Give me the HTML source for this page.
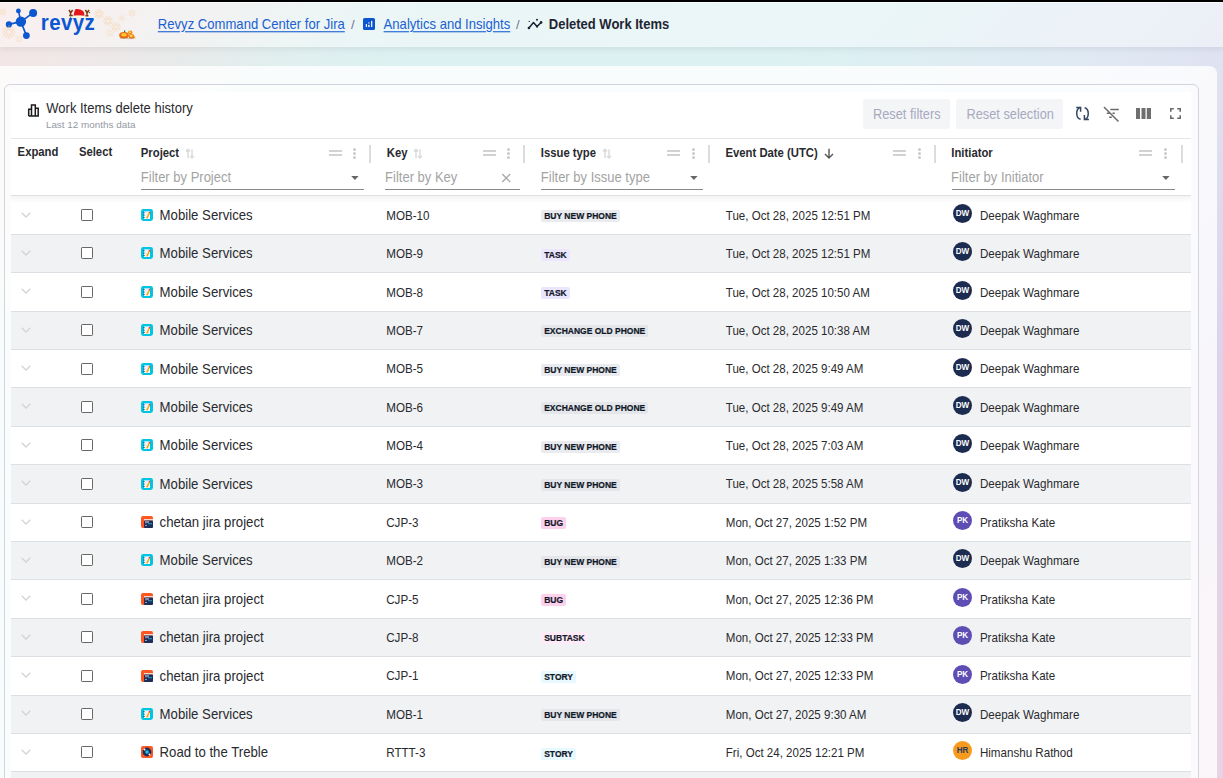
<!DOCTYPE html>
<html><head><meta charset="utf-8"><title>Deleted Work Items</title>
<style>
html,body{margin:0;padding:0;}
body{width:1223px;height:778px;overflow:hidden;position:relative;font-family:"Liberation Sans", sans-serif;
background:linear-gradient(135deg,#f6e4e4 0%,#efe8e8 7%,#e8eaea 12%,#e2eeee 16%,#dcf1f1 23%,#dcf1f2 42%,#e0e9f3 58%,#dcd3ec 78%,#e6d3e3 96%);}
.abs{position:absolute;} .abs>svg{display:block;}
.t{position:absolute;white-space:nowrap;}
#topbar{position:absolute;left:0;top:0;width:1223px;height:2px;background:#000;}
#hdr{position:absolute;left:0;top:2px;width:1223px;height:45px;
background:rgba(255,255,255,.4);
box-shadow:0 2px 6px rgba(60,70,90,.10);border-top:1px solid rgba(255,255,255,.7);box-sizing:border-box;}
#card{position:absolute;left:0;top:66px;width:1217px;height:760px;background:rgba(255,255,255,.8);border-top-right-radius:8px;}
#box{position:absolute;left:4px;top:84px;width:1195px;height:760px;border:1px solid #d2d5de;border-radius:6px;background:rgba(255,255,255,.35);box-sizing:border-box;}
#panel{position:absolute;left:11px;top:92px;width:1180px;height:700px;background:#fff;}
.btn{position:absolute;background:#f4f5f7;border-radius:3px;}
.hl{position:absolute;left:11px;width:1180px;height:1px;background:#e4e6ea;}
.row{position:absolute;left:11px;width:1180px;}
.cb{position:absolute;width:12px;height:12px;box-sizing:border-box;border:1.6px solid #676767;border-radius:1.2px;background:#fff;}
.loz{position:absolute;height:12.4px;line-height:13px;padding:0 3.2px;font-size:8.5px;font-weight:700;color:#101828;border-radius:2px;white-space:nowrap;-webkit-text-stroke:0.2px #101828;}
.av{position:absolute;width:19px;height:19px;border-radius:50%;font-size:8.1px;font-weight:700;line-height:20.6px;text-align:center;} .av span{display:inline-block;transform:scaleY(1.17);}
</style></head><body>
<div id="topbar"></div>
<div id="hdr"></div>
<svg class="abs" style="left:0;top:2px" width="45" height="45" viewBox="0 2 45 45">
<g stroke="#0b57d0" stroke-width="1.6" stroke-linecap="round">
<line x1="20.9" y1="21.6" x2="18.4" y2="10.9"/><line x1="20.9" y1="21.6" x2="33.1" y2="12.9"/>
<line x1="20.9" y1="21.6" x2="8.9" y2="24.4"/><line x1="20.9" y1="21.6" x2="26.4" y2="35.6"/></g>
<g fill="#0b57d0"><circle cx="20.9" cy="21.6" r="5.2"/><circle cx="18.4" cy="10.9" r="2.4"/>
<circle cx="33.1" cy="12.9" r="4"/><circle cx="8.9" cy="24.4" r="3.1"/><circle cx="26.4" cy="35.6" r="3.4"/></g>
</svg>
<div class="t" style="left:40.80px;top:12.85px;font-size:20.5px;line-height:20.5px;color:#0b57d0;font-weight:700;letter-spacing:0.4px;transform:scaleY(1.12);transform-origin:0 85%;">revyz</div>
<svg class="abs" style="left:0;top:0" width="140" height="45" viewBox="0 0 140 45"><g stroke="#f5cf9a" stroke-width="1.1" opacity="0.55" stroke-linecap="round" stroke-dasharray="1 0.8"><line x1="100.8" y1="14.0" x2="104.0" y2="14.0"/><line x1="100.4" y1="15.0" x2="103.0" y2="16.9"/><line x1="99.5" y1="15.7" x2="100.5" y2="18.8"/><line x1="98.5" y1="15.7" x2="97.5" y2="18.8"/><line x1="97.6" y1="15.0" x2="95.0" y2="16.9"/><line x1="97.2" y1="14.0" x2="94.0" y2="14.0"/><line x1="97.6" y1="13.0" x2="95.0" y2="11.1"/><line x1="98.5" y1="12.3" x2="97.5" y2="9.2"/><line x1="99.5" y1="12.3" x2="100.5" y2="9.2"/><line x1="100.4" y1="13.0" x2="103.0" y2="11.1"/></g><g stroke="#f5cf9a" stroke-width="1.1" opacity="0.55" stroke-linecap="round" stroke-dasharray="1 0.8"><line x1="109.9" y1="21.0" x2="113.5" y2="21.0"/><line x1="109.6" y1="22.1" x2="112.4" y2="24.2"/><line x1="108.6" y1="22.8" x2="109.7" y2="26.2"/><line x1="107.4" y1="22.8" x2="106.3" y2="26.2"/><line x1="106.4" y1="22.1" x2="103.6" y2="24.2"/><line x1="106.1" y1="21.0" x2="102.5" y2="21.0"/><line x1="106.4" y1="19.9" x2="103.6" y2="17.8"/><line x1="107.4" y1="19.2" x2="106.3" y2="15.8"/><line x1="108.6" y1="19.2" x2="109.7" y2="15.8"/><line x1="109.6" y1="19.9" x2="112.4" y2="17.8"/></g><g stroke="#f5cf9a" stroke-width="1.1" opacity="0.5" stroke-linecap="round" stroke-dasharray="1 0.8"><line x1="117.8" y1="27.0" x2="121.0" y2="27.0"/><line x1="117.4" y1="28.0" x2="120.0" y2="29.9"/><line x1="116.5" y1="28.7" x2="117.5" y2="31.8"/><line x1="115.5" y1="28.7" x2="114.5" y2="31.8"/><line x1="114.6" y1="28.0" x2="112.0" y2="29.9"/><line x1="114.2" y1="27.0" x2="111.0" y2="27.0"/><line x1="114.6" y1="26.0" x2="112.0" y2="24.1"/><line x1="115.5" y1="25.3" x2="114.5" y2="22.2"/><line x1="116.5" y1="25.3" x2="117.5" y2="22.2"/><line x1="117.4" y1="26.0" x2="120.0" y2="24.1"/></g><g stroke="#f5cf9a" stroke-width="1.1" opacity="0.4" stroke-linecap="round" stroke-dasharray="1 0.8"><line x1="133.2" y1="13.0" x2="135.5" y2="13.0"/><line x1="132.9" y1="13.9" x2="134.5" y2="15.5"/><line x1="132.0" y1="14.2" x2="132.0" y2="16.5"/><line x1="131.1" y1="13.9" x2="129.5" y2="15.5"/><line x1="130.8" y1="13.0" x2="128.5" y2="13.0"/><line x1="131.1" y1="12.1" x2="129.5" y2="10.5"/><line x1="132.0" y1="11.8" x2="132.0" y2="9.5"/><line x1="132.9" y1="12.1" x2="134.5" y2="10.5"/></g><g stroke="#f5cf9a" stroke-width="1.1" opacity="0.35" stroke-linecap="round" stroke-dasharray="1 0.8"><line x1="111.4" y1="33.0" x2="114.0" y2="33.0"/><line x1="111.0" y1="34.0" x2="112.8" y2="35.8"/><line x1="110.0" y1="34.4" x2="110.0" y2="37.0"/><line x1="109.0" y1="34.0" x2="107.2" y2="35.8"/><line x1="108.6" y1="33.0" x2="106.0" y2="33.0"/><line x1="109.0" y1="32.0" x2="107.2" y2="30.2"/><line x1="110.0" y1="31.6" x2="110.0" y2="29.0"/><line x1="111.0" y1="32.0" x2="112.8" y2="30.2"/></g><g stroke="#f5cf9a" stroke-width="1.1" opacity="0.35" stroke-linecap="round" stroke-dasharray="1 0.8"><line x1="123.0" y1="18.0" x2="125.0" y2="18.0"/><line x1="122.7" y1="18.7" x2="124.1" y2="20.1"/><line x1="122.0" y1="19.1" x2="122.0" y2="21.0"/><line x1="121.3" y1="18.7" x2="119.9" y2="20.1"/><line x1="121.0" y1="18.0" x2="119.0" y2="18.0"/><line x1="121.3" y1="17.3" x2="119.9" y2="15.9"/><line x1="122.0" y1="16.9" x2="122.0" y2="15.0"/><line x1="122.7" y1="17.3" x2="124.1" y2="15.9"/></g><g stroke="#f5cf9a" stroke-width="1.1" opacity="0.5" stroke-linecap="round" stroke-dasharray="1 0.8"><line x1="11.3" y1="32.0" x2="15.5" y2="32.0"/><line x1="11.0" y1="33.1" x2="14.6" y2="35.2"/><line x1="10.1" y1="34.0" x2="12.2" y2="37.6"/><line x1="9.0" y1="34.3" x2="9.0" y2="38.5"/><line x1="7.9" y1="34.0" x2="5.8" y2="37.6"/><line x1="7.0" y1="33.1" x2="3.4" y2="35.2"/><line x1="6.7" y1="32.0" x2="2.5" y2="32.0"/><line x1="7.0" y1="30.9" x2="3.4" y2="28.8"/><line x1="7.9" y1="30.0" x2="5.7" y2="26.4"/><line x1="9.0" y1="29.7" x2="9.0" y2="25.5"/><line x1="10.1" y1="30.0" x2="12.2" y2="26.4"/><line x1="11.0" y1="30.9" x2="14.6" y2="28.7"/></g><g stroke="#f5cf9a" stroke-width="1.1" opacity="0.4" stroke-linecap="round" stroke-dasharray="1 0.8"><line x1="4.2" y1="12.0" x2="6.5" y2="12.0"/><line x1="3.9" y1="12.9" x2="5.5" y2="14.5"/><line x1="3.0" y1="13.2" x2="3.0" y2="15.5"/><line x1="2.1" y1="12.9" x2="0.5" y2="14.5"/><line x1="1.8" y1="12.0" x2="-0.5" y2="12.0"/><line x1="2.1" y1="11.1" x2="0.5" y2="9.5"/><line x1="3.0" y1="10.8" x2="3.0" y2="8.5"/><line x1="3.9" y1="11.1" x2="5.5" y2="9.5"/></g><g stroke="#f5cf9a" stroke-width="1.1" opacity="0.3" stroke-linecap="round" stroke-dasharray="1 0.8"><line x1="20.2" y1="39.0" x2="22.5" y2="39.0"/><line x1="19.9" y1="39.9" x2="21.5" y2="41.5"/><line x1="19.0" y1="40.2" x2="19.0" y2="42.5"/><line x1="18.1" y1="39.9" x2="16.5" y2="41.5"/><line x1="17.8" y1="39.0" x2="15.5" y2="39.0"/><line x1="18.1" y1="38.1" x2="16.5" y2="36.5"/><line x1="19.0" y1="37.8" x2="19.0" y2="35.5"/><line x1="19.9" y1="38.1" x2="21.5" y2="36.5"/></g></svg>
<svg class="abs" style="left:66px;top:6px" width="28" height="14" viewBox="0 0 28 14">
<path d="M7.6 9.8 C8 6 9 3.2 10 3 C12 2.6 15 3.2 17 5 C18 6 18.6 8 18.4 9.8 Z" fill="#e3171b"/>
<path d="M6 10.6 C9 9.2 16 9.2 19.5 10.6 L19 12 C15 11.2 10 11.2 6.5 12 Z" fill="#fbf6d8"/>
<path d="M4.6 10.2 V6.8 L3 3.8 M4.6 7 L6.6 4 M3.2 9.6 H6.8" stroke="#86370f" stroke-width="1.5" fill="none"/>
<path d="M21 10.6 V6.8 L19.4 3.8 M21 7 L23 4 M19.4 9.8 H22.4" stroke="#86370f" stroke-width="1.5" fill="none"/>
<circle cx="23.5" cy="6.5" r=".7" fill="#2e7d32"/><circle cx="4.5" cy="11.3" r=".6" fill="#2e7d32"/>
</svg>
<svg class="abs" style="left:118px;top:29px" width="19" height="11" viewBox="0 0 19 11">
<ellipse cx="6" cy="6.2" rx="4.8" ry="3.3" fill="#ee6f0c"/><ellipse cx="6" cy="5.8" rx="2.8" ry="1.8" fill="#ffc53d"/>
<ellipse cx="12.2" cy="3.4" rx="2.3" ry="1.8" fill="#f0870e"/><ellipse cx="12" cy="3.2" rx="1.2" ry=".9" fill="#ffd54a"/>
<ellipse cx="13.4" cy="7.3" rx="2.8" ry="2.2" fill="#ee7a0e"/><ellipse cx="13.2" cy="6.9" rx="1.5" ry="1.1" fill="#ffe066"/>
<circle cx="16.5" cy="8.5" r=".9" fill="#e8a317"/><rect x="6" y="1.4" width="1.2" height="2" fill="#1f7a1f"/>
<path d="M1.8 9.2 H10 M9.5 9.6 H16" stroke="#5a3a2a" stroke-width=".6" opacity=".5"/>
</svg>
<div class="t" style="left:157.80px;top:18.21px;font-size:13.1px;line-height:13.1px;color:#1a60d2;font-weight:400;text-decoration:underline;text-underline-offset:2px;transform:scaleY(1.1);transform-origin:0 85%;">Revyz Command Center for Jira</div>
<div class="t" style="left:351.00px;top:18.10px;font-size:13px;line-height:13px;color:#6b778c;font-weight:400;">/</div>
<svg class="abs" style="left:363px;top:18px" width="12" height="12" viewBox="0 0 12 12">
<rect width="12" height="12" rx="1.6" fill="#0b55cf"/><rect x="2.8" y="6.1" width="1.2" height="2.9" fill="#fff"/>
<rect x="5.1" y="4.5" width="1.6" height="0.9" fill="#fff"/><rect x="5.1" y="6.8" width="1.6" height="2.2" fill="#e8eefc"/><rect x="8.1" y="2.9" width="1.2" height="6.1" fill="#fff"/></svg>
<div class="t" style="left:383.60px;top:18.21px;font-size:13.1px;line-height:13.1px;color:#1a60d2;font-weight:400;text-decoration:underline;text-underline-offset:2px;transform:scaleY(1.1);transform-origin:0 85%;">Analytics and Insights</div>
<div class="t" style="left:516.00px;top:18.10px;font-size:13px;line-height:13px;color:#6b778c;font-weight:400;">/</div>
<svg class="abs" style="left:524px;top:14px" width="22" height="20" viewBox="0 0 22 20">
<path d="M4.9 14 L9.5 8.6 L13 12.6 L17.1 8.4" stroke="#1a2033" stroke-width="1.5" fill="none" stroke-linejoin="round"/>
<circle cx="4.9" cy="14" r="1.3" fill="#1a2033"/><circle cx="17.1" cy="8.4" r="1.3" fill="#1a2033"/><circle cx="13" cy="12.6" r="1.05" fill="#1a2033"/>
<circle cx="13" cy="5.8" r="1.05" fill="#2a3045"/><circle cx="5.3" cy="7.4" r="0.7" fill="#2a3045"/></svg>
<div class="t" style="left:548.80px;top:18.30px;font-size:13px;line-height:13px;color:#1f2533;font-weight:700;transform:scaleY(1.1);transform-origin:0 85%;">Deleted Work Items</div>
<div id="card"></div>
<div id="box"></div>
<div id="panel"></div>
<svg class="abs" style="left:27px;top:103px" width="13" height="14" viewBox="0 0 13 14">
<path d="M1.7 13 V6.3 H4.5 V13 M4.5 13 V2 H8.3 V13 M8.3 13 V5.2 H11.2 V13 H1.7" stroke="#1a1a1a" stroke-width="1.5" fill="none"/></svg>
<div class="t" style="left:46.30px;top:102.00px;font-size:13px;line-height:13px;color:#292a2e;font-weight:400;transform:scaleY(1.1);transform-origin:0 85%;">Work Items delete history</div>
<div class="t" style="left:45.90px;top:120.02px;font-size:9.9px;line-height:9.9px;color:#9598a4;font-weight:400;">Last 12 months data</div>
<div class="btn" style="left:863px;top:99px;width:87px;height:30px"></div>
<div class="btn" style="left:956px;top:99px;width:107px;height:30px"></div>
<div class="t" style="left:873.00px;top:109.16px;font-size:12.8px;line-height:12.8px;color:#a7a9bf;font-weight:400;transform:scaleY(1.1);transform-origin:0 85%;">Reset filters</div>
<div class="t" style="left:966.40px;top:109.16px;font-size:12.8px;line-height:12.8px;color:#a7a9bf;font-weight:400;transform:scaleY(1.1);transform-origin:0 85%;">Reset selection</div>
<svg class="abs" style="left:1075px;top:106px" width="15" height="15" viewBox="0 0 15 15">
<g stroke="#344563" stroke-width="1.5" fill="none">
<path d="M5.4 1.6 A4.3 5.9 0 0 0 5.6 13.3"/><path d="M1.2 1.5 H5.6 V5.8"/>
<path d="M9.6 1.7 A4.3 5.9 0 0 1 9.4 13.4"/><path d="M9.4 9.1 V13.4 H13.9"/></g></svg>
<svg class="abs" style="left:1103px;top:106px" width="17" height="17" viewBox="0 0 17 17">
<path d="M7.3 3.5 H15.8 M3.8 7.3 H6.8 M9.5 7.3 H11.8 M6.2 11.2 H8.8" stroke="#6b6b6b" stroke-width="1.5"/>
<path d="M1 1 L15.5 15.5" stroke="#6b6b6b" stroke-width="1.5"/></svg>
<svg class="abs" style="left:1136px;top:108px" width="15" height="11" viewBox="0 0 15 11">
<rect x="0" y="0" width="4" height="11" fill="#6f6f6f"/><rect x="5.5" y="0" width="4" height="11" fill="#6f6f6f"/>
<rect x="10.8" y="0" width="4.2" height="11" fill="#6f6f6f"/></svg>
<svg class="abs" style="left:1170px;top:108px" width="11" height="11" viewBox="0 0 11 11">
<path d="M0.8 3.8 V0.8 H3.8 M7.2 0.8 H10.2 V3.8 M10.2 7.2 V10.2 H7.2 M3.8 10.2 H0.8 V7.2" stroke="#6b6b6b" stroke-width="1.6" fill="none"/></svg>
<div class="hl" style="top:138px"></div>
<div class="t" style="left:17.60px;top:147.43px;font-size:11.3px;line-height:11.3px;color:#292a2e;font-weight:700;transform:scaleY(1.1);transform-origin:0 85%;">Expand</div>
<div class="t" style="left:78.90px;top:147.43px;font-size:11.3px;line-height:11.3px;color:#292a2e;font-weight:700;transform:scaleY(1.1);transform-origin:0 85%;">Select</div>
<div class="t" style="left:140.80px;top:148.43px;font-size:11.3px;line-height:11.3px;color:#292a2e;font-weight:700;transform:scaleY(1.1);transform-origin:0 85%;">Project</div>
<svg class="abs" style="left:184.8px;top:148px" width="10" height="11" viewBox="0 0 10 11"><path d="M3 10.2 V1.4 M1 3.4 L3 1.4 L5 3.4 M7 1.2 V10 M5 8 L7 10 L9 8" stroke="#dcdcdc" stroke-width="1.5" fill="none"/></svg>
<div class="abs" style="left:329px;top:150.3px;width:13.4px;height:2px;background:#d2d2d2"></div><div class="abs" style="left:329px;top:154.3px;width:13.4px;height:2px;background:#d2d2d2"></div><div class="abs" style="left:353.3px;top:147.7px;width:3px;height:3px;border-radius:50%;background:#cbcbcb"></div><div class="abs" style="left:353.3px;top:152px;width:3px;height:3px;border-radius:50%;background:#cbcbcb"></div><div class="abs" style="left:353.3px;top:156.3px;width:3px;height:3px;border-radius:50%;background:#cbcbcb"></div><div class="abs" style="left:369px;top:144.5px;width:2px;height:18px;background:#dcdcdc"></div>
<div class="t" style="left:140.80px;top:170.50px;font-size:13px;line-height:13px;color:#a3a3a3;font-weight:400;transform:scaleY(1.1);transform-origin:0 85%;">Filter by Project</div>
<svg class="abs" style="left:351px;top:176.2px" width="8" height="5" viewBox="0 0 8 5"><path d="M0.2 0 H7.6 L3.9 4 Z" fill="#666"/></svg>
<div class="abs" style="left:141px;top:189px;width:223px;height:1px;background:#8a8a8a"></div>
<div class="t" style="left:386.80px;top:148.43px;font-size:11.3px;line-height:11.3px;color:#292a2e;font-weight:700;transform:scaleY(1.1);transform-origin:0 85%;">Key</div>
<svg class="abs" style="left:412.8px;top:148px" width="10" height="11" viewBox="0 0 10 11"><path d="M3 10.2 V1.4 M1 3.4 L3 1.4 L5 3.4 M7 1.2 V10 M5 8 L7 10 L9 8" stroke="#dcdcdc" stroke-width="1.5" fill="none"/></svg>
<div class="abs" style="left:483px;top:150.3px;width:13.4px;height:2px;background:#d2d2d2"></div><div class="abs" style="left:483px;top:154.3px;width:13.4px;height:2px;background:#d2d2d2"></div><div class="abs" style="left:507.0px;top:147.7px;width:3px;height:3px;border-radius:50%;background:#cbcbcb"></div><div class="abs" style="left:507.0px;top:152px;width:3px;height:3px;border-radius:50%;background:#cbcbcb"></div><div class="abs" style="left:507.0px;top:156.3px;width:3px;height:3px;border-radius:50%;background:#cbcbcb"></div><div class="abs" style="left:523px;top:144.5px;width:2px;height:18px;background:#dcdcdc"></div>
<div class="t" style="left:385.10px;top:170.50px;font-size:13px;line-height:13px;color:#a3a3a3;font-weight:400;transform:scaleY(1.1);transform-origin:0 85%;">Filter by Key</div>
<div class="abs" style="left:385px;top:189px;width:135px;height:1px;background:#8a8a8a"></div>
<svg class="abs" style="left:501px;top:173px" width="10.5" height="10" viewBox="0 0 10 10"><path d="M1 1 L9 9 M9 1 L1 9" stroke="#a3a3a3" stroke-width="1.15"/></svg>
<div class="t" style="left:540.80px;top:148.43px;font-size:11.3px;line-height:11.3px;color:#292a2e;font-weight:700;transform:scaleY(1.1);transform-origin:0 85%;">Issue type</div>
<svg class="abs" style="left:601.8px;top:148px" width="10" height="11" viewBox="0 0 10 11"><path d="M3 10.2 V1.4 M1 3.4 L3 1.4 L5 3.4 M7 1.2 V10 M5 8 L7 10 L9 8" stroke="#dcdcdc" stroke-width="1.5" fill="none"/></svg>
<div class="abs" style="left:667px;top:150.3px;width:13.4px;height:2px;background:#d2d2d2"></div><div class="abs" style="left:667px;top:154.3px;width:13.4px;height:2px;background:#d2d2d2"></div><div class="abs" style="left:692.0999999999999px;top:147.7px;width:3px;height:3px;border-radius:50%;background:#cbcbcb"></div><div class="abs" style="left:692.0999999999999px;top:152px;width:3px;height:3px;border-radius:50%;background:#cbcbcb"></div><div class="abs" style="left:692.0999999999999px;top:156.3px;width:3px;height:3px;border-radius:50%;background:#cbcbcb"></div><div class="abs" style="left:708px;top:144.5px;width:2px;height:18px;background:#dcdcdc"></div>
<div class="t" style="left:540.80px;top:170.50px;font-size:13px;line-height:13px;color:#a3a3a3;font-weight:400;transform:scaleY(1.1);transform-origin:0 85%;">Filter by Issue type</div>
<svg class="abs" style="left:690px;top:176.2px" width="8" height="5" viewBox="0 0 8 5"><path d="M0.2 0 H7.6 L3.9 4 Z" fill="#666"/></svg>
<div class="abs" style="left:541px;top:189px;width:162px;height:1px;background:#8a8a8a"></div>
<div class="t" style="left:725.50px;top:148.43px;font-size:11.3px;line-height:11.3px;color:#292a2e;font-weight:700;transform:scaleY(1.1);transform-origin:0 85%;">Event Date (UTC)</div>
<svg class="abs" style="left:824px;top:148px" width="10" height="11" viewBox="0 0 10 11"><path d="M5 0.8 V10 M1 6 L5 10 L9 6" stroke="#555" stroke-width="1.4" fill="none"/></svg>
<div class="abs" style="left:893px;top:150.3px;width:13.4px;height:2px;background:#d2d2d2"></div><div class="abs" style="left:893px;top:154.3px;width:13.4px;height:2px;background:#d2d2d2"></div><div class="abs" style="left:918.0px;top:147.7px;width:3px;height:3px;border-radius:50%;background:#cbcbcb"></div><div class="abs" style="left:918.0px;top:152px;width:3px;height:3px;border-radius:50%;background:#cbcbcb"></div><div class="abs" style="left:918.0px;top:156.3px;width:3px;height:3px;border-radius:50%;background:#cbcbcb"></div><div class="abs" style="left:933.5px;top:144.5px;width:2px;height:18px;background:#dcdcdc"></div>
<div class="t" style="left:951.30px;top:148.43px;font-size:11.3px;line-height:11.3px;color:#292a2e;font-weight:700;transform:scaleY(1.1);transform-origin:0 85%;">Initiator</div>
<div class="abs" style="left:1139px;top:150.3px;width:13.4px;height:2px;background:#d2d2d2"></div><div class="abs" style="left:1139px;top:154.3px;width:13.4px;height:2px;background:#d2d2d2"></div><div class="abs" style="left:1164.1px;top:147.7px;width:3px;height:3px;border-radius:50%;background:#cbcbcb"></div><div class="abs" style="left:1164.1px;top:152px;width:3px;height:3px;border-radius:50%;background:#cbcbcb"></div><div class="abs" style="left:1164.1px;top:156.3px;width:3px;height:3px;border-radius:50%;background:#cbcbcb"></div><div class="abs" style="left:1180.5px;top:144.5px;width:2px;height:18px;background:#dcdcdc"></div>
<div class="t" style="left:951.10px;top:170.50px;font-size:13px;line-height:13px;color:#a3a3a3;font-weight:400;transform:scaleY(1.1);transform-origin:0 85%;">Filter by Initiator</div>
<svg class="abs" style="left:1161.5px;top:176.2px" width="8" height="5" viewBox="0 0 8 5"><path d="M0.2 0 H7.6 L3.9 4 Z" fill="#666"/></svg>
<div class="abs" style="left:951.5px;top:189px;width:223.5px;height:1px;background:#8a8a8a"></div>
<div class="hl" style="top:195px;background:#e0e0e0"></div>
<div class="row" style="top:196px;height:38px;background:#ffffff"></div>
<div class="hl" style="top:234px;background:#dcdfe4"></div>
<svg class="abs" style="left:21px;top:212px" width="10" height="6" viewBox="0 0 10 6"><path d="M0.7 0.7 L5 5 L9.3 0.7" stroke="#d4d4d4" stroke-width="1.3" fill="none"/></svg>
<div class="cb" style="left:81px;top:209px"></div>
<div class="abs" style="left:141px;top:209px;width:12px;height:12px"><svg width="12" height="12" viewBox="0 0 12 12"><rect width="12" height="12" rx="2.4" fill="#00c4e4"/>
<rect x="3" y="2.4" width="6" height="7.6" fill="#fff"/><rect x="3.6" y="3" width="4.6" height="6.6" fill="#eef3fb"/>
<rect x="2.3" y="3.2" width="1.3" height="1" fill="#2b3f6b"/><rect x="2.3" y="5.6" width="1.3" height="1" fill="#2b3f6b"/><rect x="2.3" y="8" width="1.3" height="1" fill="#2b3f6b"/>
<path d="M5.8 9.4 L8.4 4" stroke="#f7a600" stroke-width="1.5"/><circle cx="8.6" cy="3.6" r=".9" fill="#ef4444"/></svg></div>
<div class="t" style="left:159.60px;top:208.83px;font-size:13.2px;line-height:13.2px;color:#292a2e;font-weight:400;transform:scaleY(1.1);transform-origin:0 85%;">Mobile Services</div>
<div class="t" style="left:386.20px;top:210.34px;font-size:11.65px;line-height:11.65px;color:#292a2e;font-weight:400;transform:scaleY(1.1);transform-origin:0 85%;">MOB-10</div>
<div class="loz" style="left:541px;top:210px;background:#e9ebee">BUY NEW PHONE</div>
<div class="t" style="left:725.80px;top:211.02px;font-size:11.55px;line-height:11.55px;color:#292a2e;font-weight:400;transform:scaleY(1.1);transform-origin:0 85%;">Tue, Oct 28, 2025 12:51 PM</div>
<div class="av" style="left:953px;top:204px;background:#1c2b50;color:#fff"><span>DW</span></div>
<div class="t" style="left:979.90px;top:210.38px;font-size:11.6px;line-height:11.6px;color:#292a2e;font-weight:400;transform:scaleY(1.1);transform-origin:0 85%;">Deepak Waghmare</div>
<div class="row" style="top:235px;height:37px;background:#f1f2f4"></div>
<div class="hl" style="top:272px;background:#dcdfe4"></div>
<svg class="abs" style="left:21px;top:250px" width="10" height="6" viewBox="0 0 10 6"><path d="M0.7 0.7 L5 5 L9.3 0.7" stroke="#d4d4d4" stroke-width="1.3" fill="none"/></svg>
<div class="cb" style="left:81px;top:247px"></div>
<div class="abs" style="left:141px;top:247px;width:12px;height:12px"><svg width="12" height="12" viewBox="0 0 12 12"><rect width="12" height="12" rx="2.4" fill="#00c4e4"/>
<rect x="3" y="2.4" width="6" height="7.6" fill="#fff"/><rect x="3.6" y="3" width="4.6" height="6.6" fill="#eef3fb"/>
<rect x="2.3" y="3.2" width="1.3" height="1" fill="#2b3f6b"/><rect x="2.3" y="5.6" width="1.3" height="1" fill="#2b3f6b"/><rect x="2.3" y="8" width="1.3" height="1" fill="#2b3f6b"/>
<path d="M5.8 9.4 L8.4 4" stroke="#f7a600" stroke-width="1.5"/><circle cx="8.6" cy="3.6" r=".9" fill="#ef4444"/></svg></div>
<div class="t" style="left:159.60px;top:246.83px;font-size:13.2px;line-height:13.2px;color:#292a2e;font-weight:400;transform:scaleY(1.1);transform-origin:0 85%;">Mobile Services</div>
<div class="t" style="left:386.20px;top:248.34px;font-size:11.65px;line-height:11.65px;color:#292a2e;font-weight:400;transform:scaleY(1.1);transform-origin:0 85%;">MOB-9</div>
<div class="loz" style="left:541px;top:249px;background:#ebe6fe">TASK</div>
<div class="t" style="left:725.80px;top:249.02px;font-size:11.55px;line-height:11.55px;color:#292a2e;font-weight:400;transform:scaleY(1.1);transform-origin:0 85%;">Tue, Oct 28, 2025 12:51 PM</div>
<div class="av" style="left:953px;top:242px;background:#1c2b50;color:#fff"><span>DW</span></div>
<div class="t" style="left:979.90px;top:248.38px;font-size:11.6px;line-height:11.6px;color:#292a2e;font-weight:400;transform:scaleY(1.1);transform-origin:0 85%;">Deepak Waghmare</div>
<div class="row" style="top:273px;height:38px;background:#ffffff"></div>
<div class="hl" style="top:311px;background:#dcdfe4"></div>
<svg class="abs" style="left:21px;top:288px" width="10" height="6" viewBox="0 0 10 6"><path d="M0.7 0.7 L5 5 L9.3 0.7" stroke="#d4d4d4" stroke-width="1.3" fill="none"/></svg>
<div class="cb" style="left:81px;top:286px"></div>
<div class="abs" style="left:141px;top:286px;width:12px;height:12px"><svg width="12" height="12" viewBox="0 0 12 12"><rect width="12" height="12" rx="2.4" fill="#00c4e4"/>
<rect x="3" y="2.4" width="6" height="7.6" fill="#fff"/><rect x="3.6" y="3" width="4.6" height="6.6" fill="#eef3fb"/>
<rect x="2.3" y="3.2" width="1.3" height="1" fill="#2b3f6b"/><rect x="2.3" y="5.6" width="1.3" height="1" fill="#2b3f6b"/><rect x="2.3" y="8" width="1.3" height="1" fill="#2b3f6b"/>
<path d="M5.8 9.4 L8.4 4" stroke="#f7a600" stroke-width="1.5"/><circle cx="8.6" cy="3.6" r=".9" fill="#ef4444"/></svg></div>
<div class="t" style="left:159.60px;top:285.83px;font-size:13.2px;line-height:13.2px;color:#292a2e;font-weight:400;transform:scaleY(1.1);transform-origin:0 85%;">Mobile Services</div>
<div class="t" style="left:386.20px;top:287.34px;font-size:11.65px;line-height:11.65px;color:#292a2e;font-weight:400;transform:scaleY(1.1);transform-origin:0 85%;">MOB-8</div>
<div class="loz" style="left:541px;top:287px;background:#ebe6fe">TASK</div>
<div class="t" style="left:725.80px;top:288.02px;font-size:11.55px;line-height:11.55px;color:#292a2e;font-weight:400;transform:scaleY(1.1);transform-origin:0 85%;">Tue, Oct 28, 2025 10:50 AM</div>
<div class="av" style="left:953px;top:281px;background:#1c2b50;color:#fff"><span>DW</span></div>
<div class="t" style="left:979.90px;top:287.38px;font-size:11.6px;line-height:11.6px;color:#292a2e;font-weight:400;transform:scaleY(1.1);transform-origin:0 85%;">Deepak Waghmare</div>
<div class="row" style="top:312px;height:37px;background:#f1f2f4"></div>
<div class="hl" style="top:349px;background:#dcdfe4"></div>
<svg class="abs" style="left:21px;top:327px" width="10" height="6" viewBox="0 0 10 6"><path d="M0.7 0.7 L5 5 L9.3 0.7" stroke="#d4d4d4" stroke-width="1.3" fill="none"/></svg>
<div class="cb" style="left:81px;top:324px"></div>
<div class="abs" style="left:141px;top:324px;width:12px;height:12px"><svg width="12" height="12" viewBox="0 0 12 12"><rect width="12" height="12" rx="2.4" fill="#00c4e4"/>
<rect x="3" y="2.4" width="6" height="7.6" fill="#fff"/><rect x="3.6" y="3" width="4.6" height="6.6" fill="#eef3fb"/>
<rect x="2.3" y="3.2" width="1.3" height="1" fill="#2b3f6b"/><rect x="2.3" y="5.6" width="1.3" height="1" fill="#2b3f6b"/><rect x="2.3" y="8" width="1.3" height="1" fill="#2b3f6b"/>
<path d="M5.8 9.4 L8.4 4" stroke="#f7a600" stroke-width="1.5"/><circle cx="8.6" cy="3.6" r=".9" fill="#ef4444"/></svg></div>
<div class="t" style="left:159.60px;top:323.83px;font-size:13.2px;line-height:13.2px;color:#292a2e;font-weight:400;transform:scaleY(1.1);transform-origin:0 85%;">Mobile Services</div>
<div class="t" style="left:386.20px;top:325.34px;font-size:11.65px;line-height:11.65px;color:#292a2e;font-weight:400;transform:scaleY(1.1);transform-origin:0 85%;">MOB-7</div>
<div class="loz" style="left:541px;top:325px;background:#e4e6ea">EXCHANGE OLD PHONE</div>
<div class="t" style="left:725.80px;top:326.02px;font-size:11.55px;line-height:11.55px;color:#292a2e;font-weight:400;transform:scaleY(1.1);transform-origin:0 85%;">Tue, Oct 28, 2025 10:38 AM</div>
<div class="av" style="left:953px;top:319px;background:#1c2b50;color:#fff"><span>DW</span></div>
<div class="t" style="left:979.90px;top:325.38px;font-size:11.6px;line-height:11.6px;color:#292a2e;font-weight:400;transform:scaleY(1.1);transform-origin:0 85%;">Deepak Waghmare</div>
<div class="row" style="top:350px;height:37px;background:#ffffff"></div>
<div class="hl" style="top:387px;background:#dcdfe4"></div>
<svg class="abs" style="left:21px;top:365px" width="10" height="6" viewBox="0 0 10 6"><path d="M0.7 0.7 L5 5 L9.3 0.7" stroke="#d4d4d4" stroke-width="1.3" fill="none"/></svg>
<div class="cb" style="left:81px;top:363px"></div>
<div class="abs" style="left:141px;top:363px;width:12px;height:12px"><svg width="12" height="12" viewBox="0 0 12 12"><rect width="12" height="12" rx="2.4" fill="#00c4e4"/>
<rect x="3" y="2.4" width="6" height="7.6" fill="#fff"/><rect x="3.6" y="3" width="4.6" height="6.6" fill="#eef3fb"/>
<rect x="2.3" y="3.2" width="1.3" height="1" fill="#2b3f6b"/><rect x="2.3" y="5.6" width="1.3" height="1" fill="#2b3f6b"/><rect x="2.3" y="8" width="1.3" height="1" fill="#2b3f6b"/>
<path d="M5.8 9.4 L8.4 4" stroke="#f7a600" stroke-width="1.5"/><circle cx="8.6" cy="3.6" r=".9" fill="#ef4444"/></svg></div>
<div class="t" style="left:159.60px;top:362.83px;font-size:13.2px;line-height:13.2px;color:#292a2e;font-weight:400;transform:scaleY(1.1);transform-origin:0 85%;">Mobile Services</div>
<div class="t" style="left:386.20px;top:363.34px;font-size:11.65px;line-height:11.65px;color:#292a2e;font-weight:400;transform:scaleY(1.1);transform-origin:0 85%;">MOB-5</div>
<div class="loz" style="left:541px;top:364px;background:#e9ebee">BUY NEW PHONE</div>
<div class="t" style="left:725.80px;top:364.02px;font-size:11.55px;line-height:11.55px;color:#292a2e;font-weight:400;transform:scaleY(1.1);transform-origin:0 85%;">Tue, Oct 28, 2025 9:49 AM</div>
<div class="av" style="left:953px;top:358px;background:#1c2b50;color:#fff"><span>DW</span></div>
<div class="t" style="left:979.90px;top:363.38px;font-size:11.6px;line-height:11.6px;color:#292a2e;font-weight:400;transform:scaleY(1.1);transform-origin:0 85%;">Deepak Waghmare</div>
<div class="row" style="top:388px;height:38px;background:#f1f2f4"></div>
<div class="hl" style="top:426px;background:#dcdfe4"></div>
<svg class="abs" style="left:21px;top:403px" width="10" height="6" viewBox="0 0 10 6"><path d="M0.7 0.7 L5 5 L9.3 0.7" stroke="#d4d4d4" stroke-width="1.3" fill="none"/></svg>
<div class="cb" style="left:81px;top:401px"></div>
<div class="abs" style="left:141px;top:401px;width:12px;height:12px"><svg width="12" height="12" viewBox="0 0 12 12"><rect width="12" height="12" rx="2.4" fill="#00c4e4"/>
<rect x="3" y="2.4" width="6" height="7.6" fill="#fff"/><rect x="3.6" y="3" width="4.6" height="6.6" fill="#eef3fb"/>
<rect x="2.3" y="3.2" width="1.3" height="1" fill="#2b3f6b"/><rect x="2.3" y="5.6" width="1.3" height="1" fill="#2b3f6b"/><rect x="2.3" y="8" width="1.3" height="1" fill="#2b3f6b"/>
<path d="M5.8 9.4 L8.4 4" stroke="#f7a600" stroke-width="1.5"/><circle cx="8.6" cy="3.6" r=".9" fill="#ef4444"/></svg></div>
<div class="t" style="left:159.60px;top:400.83px;font-size:13.2px;line-height:13.2px;color:#292a2e;font-weight:400;transform:scaleY(1.1);transform-origin:0 85%;">Mobile Services</div>
<div class="t" style="left:386.20px;top:402.34px;font-size:11.65px;line-height:11.65px;color:#292a2e;font-weight:400;transform:scaleY(1.1);transform-origin:0 85%;">MOB-6</div>
<div class="loz" style="left:541px;top:402px;background:#e4e6ea">EXCHANGE OLD PHONE</div>
<div class="t" style="left:725.80px;top:403.02px;font-size:11.55px;line-height:11.55px;color:#292a2e;font-weight:400;transform:scaleY(1.1);transform-origin:0 85%;">Tue, Oct 28, 2025 9:49 AM</div>
<div class="av" style="left:953px;top:396px;background:#1c2b50;color:#fff"><span>DW</span></div>
<div class="t" style="left:979.90px;top:402.38px;font-size:11.6px;line-height:11.6px;color:#292a2e;font-weight:400;transform:scaleY(1.1);transform-origin:0 85%;">Deepak Waghmare</div>
<div class="row" style="top:427px;height:37px;background:#ffffff"></div>
<div class="hl" style="top:464px;background:#dcdfe4"></div>
<svg class="abs" style="left:21px;top:442px" width="10" height="6" viewBox="0 0 10 6"><path d="M0.7 0.7 L5 5 L9.3 0.7" stroke="#d4d4d4" stroke-width="1.3" fill="none"/></svg>
<div class="cb" style="left:81px;top:439px"></div>
<div class="abs" style="left:141px;top:439px;width:12px;height:12px"><svg width="12" height="12" viewBox="0 0 12 12"><rect width="12" height="12" rx="2.4" fill="#00c4e4"/>
<rect x="3" y="2.4" width="6" height="7.6" fill="#fff"/><rect x="3.6" y="3" width="4.6" height="6.6" fill="#eef3fb"/>
<rect x="2.3" y="3.2" width="1.3" height="1" fill="#2b3f6b"/><rect x="2.3" y="5.6" width="1.3" height="1" fill="#2b3f6b"/><rect x="2.3" y="8" width="1.3" height="1" fill="#2b3f6b"/>
<path d="M5.8 9.4 L8.4 4" stroke="#f7a600" stroke-width="1.5"/><circle cx="8.6" cy="3.6" r=".9" fill="#ef4444"/></svg></div>
<div class="t" style="left:159.60px;top:438.83px;font-size:13.2px;line-height:13.2px;color:#292a2e;font-weight:400;transform:scaleY(1.1);transform-origin:0 85%;">Mobile Services</div>
<div class="t" style="left:386.20px;top:440.34px;font-size:11.65px;line-height:11.65px;color:#292a2e;font-weight:400;transform:scaleY(1.1);transform-origin:0 85%;">MOB-4</div>
<div class="loz" style="left:541px;top:441px;background:#e9ebee">BUY NEW PHONE</div>
<div class="t" style="left:725.80px;top:441.02px;font-size:11.55px;line-height:11.55px;color:#292a2e;font-weight:400;transform:scaleY(1.1);transform-origin:0 85%;">Tue, Oct 28, 2025 7:03 AM</div>
<div class="av" style="left:953px;top:434px;background:#1c2b50;color:#fff"><span>DW</span></div>
<div class="t" style="left:979.90px;top:440.38px;font-size:11.6px;line-height:11.6px;color:#292a2e;font-weight:400;transform:scaleY(1.1);transform-origin:0 85%;">Deepak Waghmare</div>
<div class="row" style="top:465px;height:38px;background:#f1f2f4"></div>
<div class="hl" style="top:503px;background:#dcdfe4"></div>
<svg class="abs" style="left:21px;top:480px" width="10" height="6" viewBox="0 0 10 6"><path d="M0.7 0.7 L5 5 L9.3 0.7" stroke="#d4d4d4" stroke-width="1.3" fill="none"/></svg>
<div class="cb" style="left:81px;top:478px"></div>
<div class="abs" style="left:141px;top:478px;width:12px;height:12px"><svg width="12" height="12" viewBox="0 0 12 12"><rect width="12" height="12" rx="2.4" fill="#00c4e4"/>
<rect x="3" y="2.4" width="6" height="7.6" fill="#fff"/><rect x="3.6" y="3" width="4.6" height="6.6" fill="#eef3fb"/>
<rect x="2.3" y="3.2" width="1.3" height="1" fill="#2b3f6b"/><rect x="2.3" y="5.6" width="1.3" height="1" fill="#2b3f6b"/><rect x="2.3" y="8" width="1.3" height="1" fill="#2b3f6b"/>
<path d="M5.8 9.4 L8.4 4" stroke="#f7a600" stroke-width="1.5"/><circle cx="8.6" cy="3.6" r=".9" fill="#ef4444"/></svg></div>
<div class="t" style="left:159.60px;top:477.83px;font-size:13.2px;line-height:13.2px;color:#292a2e;font-weight:400;transform:scaleY(1.1);transform-origin:0 85%;">Mobile Services</div>
<div class="t" style="left:386.20px;top:478.34px;font-size:11.65px;line-height:11.65px;color:#292a2e;font-weight:400;transform:scaleY(1.1);transform-origin:0 85%;">MOB-3</div>
<div class="loz" style="left:541px;top:479px;background:#e4e6ea">BUY NEW PHONE</div>
<div class="t" style="left:725.80px;top:479.02px;font-size:11.55px;line-height:11.55px;color:#292a2e;font-weight:400;transform:scaleY(1.1);transform-origin:0 85%;">Tue, Oct 28, 2025 5:58 AM</div>
<div class="av" style="left:953px;top:473px;background:#1c2b50;color:#fff"><span>DW</span></div>
<div class="t" style="left:979.90px;top:478.38px;font-size:11.6px;line-height:11.6px;color:#292a2e;font-weight:400;transform:scaleY(1.1);transform-origin:0 85%;">Deepak Waghmare</div>
<div class="row" style="top:504px;height:37px;background:#ffffff"></div>
<div class="hl" style="top:541px;background:#dcdfe4"></div>
<svg class="abs" style="left:21px;top:519px" width="10" height="6" viewBox="0 0 10 6"><path d="M0.7 0.7 L5 5 L9.3 0.7" stroke="#d4d4d4" stroke-width="1.3" fill="none"/></svg>
<div class="cb" style="left:81px;top:516px"></div>
<div class="abs" style="left:141px;top:516px;width:12px;height:12px"><svg width="12" height="12" viewBox="0 0 12 12"><rect width="12" height="12" rx="2" fill="#ff5722"/>
<rect x="3" y="3" width="9" height="1.6" fill="#f3d8d0"/><rect x="3" y="4.4" width="9" height="7.6" rx="1" fill="#1b2f5a"/>
<rect x="4" y="5.5" width="4" height="1" fill="#dfe6f0"/><rect x="7" y="7.2" width="4" height="1" fill="#1fa3c6"/>
<rect x="4" y="7.2" width="1.5" height="1" fill="#c0392b"/><rect x="4" y="9" width="2" height="1" fill="#8aa0c0"/></svg></div>
<div class="t" style="left:159.60px;top:515.83px;font-size:13.2px;line-height:13.2px;color:#292a2e;font-weight:400;transform:scaleY(1.1);transform-origin:0 85%;">chetan jira project</div>
<div class="t" style="left:386.20px;top:517.34px;font-size:11.65px;line-height:11.65px;color:#292a2e;font-weight:400;transform:scaleY(1.1);transform-origin:0 85%;">CJP-3</div>
<div class="loz" style="left:541px;top:517px;background:#fdd0ec">BUG</div>
<div class="t" style="left:725.80px;top:518.02px;font-size:11.55px;line-height:11.55px;color:#292a2e;font-weight:400;transform:scaleY(1.1);transform-origin:0 85%;">Mon, Oct 27, 2025 1:52 PM</div>
<div class="av" style="left:953px;top:511px;background:#5e4db2;color:#fff"><span>PK</span></div>
<div class="t" style="left:979.90px;top:517.38px;font-size:11.6px;line-height:11.6px;color:#292a2e;font-weight:400;transform:scaleY(1.1);transform-origin:0 85%;">Pratiksha Kate</div>
<div class="row" style="top:542px;height:37px;background:#f1f2f4"></div>
<div class="hl" style="top:579px;background:#dcdfe4"></div>
<svg class="abs" style="left:21px;top:557px" width="10" height="6" viewBox="0 0 10 6"><path d="M0.7 0.7 L5 5 L9.3 0.7" stroke="#d4d4d4" stroke-width="1.3" fill="none"/></svg>
<div class="cb" style="left:81px;top:554px"></div>
<div class="abs" style="left:141px;top:554px;width:12px;height:12px"><svg width="12" height="12" viewBox="0 0 12 12"><rect width="12" height="12" rx="2.4" fill="#00c4e4"/>
<rect x="3" y="2.4" width="6" height="7.6" fill="#fff"/><rect x="3.6" y="3" width="4.6" height="6.6" fill="#eef3fb"/>
<rect x="2.3" y="3.2" width="1.3" height="1" fill="#2b3f6b"/><rect x="2.3" y="5.6" width="1.3" height="1" fill="#2b3f6b"/><rect x="2.3" y="8" width="1.3" height="1" fill="#2b3f6b"/>
<path d="M5.8 9.4 L8.4 4" stroke="#f7a600" stroke-width="1.5"/><circle cx="8.6" cy="3.6" r=".9" fill="#ef4444"/></svg></div>
<div class="t" style="left:159.60px;top:553.83px;font-size:13.2px;line-height:13.2px;color:#292a2e;font-weight:400;transform:scaleY(1.1);transform-origin:0 85%;">Mobile Services</div>
<div class="t" style="left:386.20px;top:555.34px;font-size:11.65px;line-height:11.65px;color:#292a2e;font-weight:400;transform:scaleY(1.1);transform-origin:0 85%;">MOB-2</div>
<div class="loz" style="left:541px;top:556px;background:#e4e6ea">BUY NEW PHONE</div>
<div class="t" style="left:725.80px;top:556.02px;font-size:11.55px;line-height:11.55px;color:#292a2e;font-weight:400;transform:scaleY(1.1);transform-origin:0 85%;">Mon, Oct 27, 2025 1:33 PM</div>
<div class="av" style="left:953px;top:549px;background:#1c2b50;color:#fff"><span>DW</span></div>
<div class="t" style="left:979.90px;top:555.38px;font-size:11.6px;line-height:11.6px;color:#292a2e;font-weight:400;transform:scaleY(1.1);transform-origin:0 85%;">Deepak Waghmare</div>
<div class="row" style="top:580px;height:38px;background:#ffffff"></div>
<div class="hl" style="top:618px;background:#dcdfe4"></div>
<svg class="abs" style="left:21px;top:595px" width="10" height="6" viewBox="0 0 10 6"><path d="M0.7 0.7 L5 5 L9.3 0.7" stroke="#d4d4d4" stroke-width="1.3" fill="none"/></svg>
<div class="cb" style="left:81px;top:593px"></div>
<div class="abs" style="left:141px;top:593px;width:12px;height:12px"><svg width="12" height="12" viewBox="0 0 12 12"><rect width="12" height="12" rx="2" fill="#ff5722"/>
<rect x="3" y="3" width="9" height="1.6" fill="#f3d8d0"/><rect x="3" y="4.4" width="9" height="7.6" rx="1" fill="#1b2f5a"/>
<rect x="4" y="5.5" width="4" height="1" fill="#dfe6f0"/><rect x="7" y="7.2" width="4" height="1" fill="#1fa3c6"/>
<rect x="4" y="7.2" width="1.5" height="1" fill="#c0392b"/><rect x="4" y="9" width="2" height="1" fill="#8aa0c0"/></svg></div>
<div class="t" style="left:159.60px;top:592.83px;font-size:13.2px;line-height:13.2px;color:#292a2e;font-weight:400;transform:scaleY(1.1);transform-origin:0 85%;">chetan jira project</div>
<div class="t" style="left:386.20px;top:594.34px;font-size:11.65px;line-height:11.65px;color:#292a2e;font-weight:400;transform:scaleY(1.1);transform-origin:0 85%;">CJP-5</div>
<div class="loz" style="left:541px;top:594px;background:#fdd0ec">BUG</div>
<div class="t" style="left:725.80px;top:595.02px;font-size:11.55px;line-height:11.55px;color:#292a2e;font-weight:400;transform:scaleY(1.1);transform-origin:0 85%;">Mon, Oct 27, 2025 12:36 PM</div>
<div class="av" style="left:953px;top:588px;background:#5e4db2;color:#fff"><span>PK</span></div>
<div class="t" style="left:979.90px;top:594.38px;font-size:11.6px;line-height:11.6px;color:#292a2e;font-weight:400;transform:scaleY(1.1);transform-origin:0 85%;">Pratiksha Kate</div>
<div class="row" style="top:619px;height:37px;background:#f1f2f4"></div>
<div class="hl" style="top:656px;background:#dcdfe4"></div>
<svg class="abs" style="left:21px;top:634px" width="10" height="6" viewBox="0 0 10 6"><path d="M0.7 0.7 L5 5 L9.3 0.7" stroke="#d4d4d4" stroke-width="1.3" fill="none"/></svg>
<div class="cb" style="left:81px;top:631px"></div>
<div class="abs" style="left:141px;top:631px;width:12px;height:12px"><svg width="12" height="12" viewBox="0 0 12 12"><rect width="12" height="12" rx="2" fill="#ff5722"/>
<rect x="3" y="3" width="9" height="1.6" fill="#f3d8d0"/><rect x="3" y="4.4" width="9" height="7.6" rx="1" fill="#1b2f5a"/>
<rect x="4" y="5.5" width="4" height="1" fill="#dfe6f0"/><rect x="7" y="7.2" width="4" height="1" fill="#1fa3c6"/>
<rect x="4" y="7.2" width="1.5" height="1" fill="#c0392b"/><rect x="4" y="9" width="2" height="1" fill="#8aa0c0"/></svg></div>
<div class="t" style="left:159.60px;top:630.83px;font-size:13.2px;line-height:13.2px;color:#292a2e;font-weight:400;transform:scaleY(1.1);transform-origin:0 85%;">chetan jira project</div>
<div class="t" style="left:386.20px;top:632.34px;font-size:11.65px;line-height:11.65px;color:#292a2e;font-weight:400;transform:scaleY(1.1);transform-origin:0 85%;">CJP-8</div>
<div class="loz" style="left:541px;top:632px;background:#ffecf8">SUBTASK</div>
<div class="t" style="left:725.80px;top:633.02px;font-size:11.55px;line-height:11.55px;color:#292a2e;font-weight:400;transform:scaleY(1.1);transform-origin:0 85%;">Mon, Oct 27, 2025 12:33 PM</div>
<div class="av" style="left:953px;top:626px;background:#5e4db2;color:#fff"><span>PK</span></div>
<div class="t" style="left:979.90px;top:632.38px;font-size:11.6px;line-height:11.6px;color:#292a2e;font-weight:400;transform:scaleY(1.1);transform-origin:0 85%;">Pratiksha Kate</div>
<div class="row" style="top:657px;height:38px;background:#ffffff"></div>
<div class="hl" style="top:695px;background:#dcdfe4"></div>
<svg class="abs" style="left:21px;top:672px" width="10" height="6" viewBox="0 0 10 6"><path d="M0.7 0.7 L5 5 L9.3 0.7" stroke="#d4d4d4" stroke-width="1.3" fill="none"/></svg>
<div class="cb" style="left:81px;top:670px"></div>
<div class="abs" style="left:141px;top:670px;width:12px;height:12px"><svg width="12" height="12" viewBox="0 0 12 12"><rect width="12" height="12" rx="2" fill="#ff5722"/>
<rect x="3" y="3" width="9" height="1.6" fill="#f3d8d0"/><rect x="3" y="4.4" width="9" height="7.6" rx="1" fill="#1b2f5a"/>
<rect x="4" y="5.5" width="4" height="1" fill="#dfe6f0"/><rect x="7" y="7.2" width="4" height="1" fill="#1fa3c6"/>
<rect x="4" y="7.2" width="1.5" height="1" fill="#c0392b"/><rect x="4" y="9" width="2" height="1" fill="#8aa0c0"/></svg></div>
<div class="t" style="left:159.60px;top:669.83px;font-size:13.2px;line-height:13.2px;color:#292a2e;font-weight:400;transform:scaleY(1.1);transform-origin:0 85%;">chetan jira project</div>
<div class="t" style="left:386.20px;top:670.34px;font-size:11.65px;line-height:11.65px;color:#292a2e;font-weight:400;transform:scaleY(1.1);transform-origin:0 85%;">CJP-1</div>
<div class="loz" style="left:541px;top:671px;background:#e7f9ff">STORY</div>
<div class="t" style="left:725.80px;top:671.02px;font-size:11.55px;line-height:11.55px;color:#292a2e;font-weight:400;transform:scaleY(1.1);transform-origin:0 85%;">Mon, Oct 27, 2025 12:33 PM</div>
<div class="av" style="left:953px;top:665px;background:#5e4db2;color:#fff"><span>PK</span></div>
<div class="t" style="left:979.90px;top:670.38px;font-size:11.6px;line-height:11.6px;color:#292a2e;font-weight:400;transform:scaleY(1.1);transform-origin:0 85%;">Pratiksha Kate</div>
<div class="row" style="top:696px;height:37px;background:#f1f2f4"></div>
<div class="hl" style="top:733px;background:#dcdfe4"></div>
<svg class="abs" style="left:21px;top:710px" width="10" height="6" viewBox="0 0 10 6"><path d="M0.7 0.7 L5 5 L9.3 0.7" stroke="#d4d4d4" stroke-width="1.3" fill="none"/></svg>
<div class="cb" style="left:81px;top:708px"></div>
<div class="abs" style="left:141px;top:708px;width:12px;height:12px"><svg width="12" height="12" viewBox="0 0 12 12"><rect width="12" height="12" rx="2.4" fill="#00c4e4"/>
<rect x="3" y="2.4" width="6" height="7.6" fill="#fff"/><rect x="3.6" y="3" width="4.6" height="6.6" fill="#eef3fb"/>
<rect x="2.3" y="3.2" width="1.3" height="1" fill="#2b3f6b"/><rect x="2.3" y="5.6" width="1.3" height="1" fill="#2b3f6b"/><rect x="2.3" y="8" width="1.3" height="1" fill="#2b3f6b"/>
<path d="M5.8 9.4 L8.4 4" stroke="#f7a600" stroke-width="1.5"/><circle cx="8.6" cy="3.6" r=".9" fill="#ef4444"/></svg></div>
<div class="t" style="left:159.60px;top:707.83px;font-size:13.2px;line-height:13.2px;color:#292a2e;font-weight:400;transform:scaleY(1.1);transform-origin:0 85%;">Mobile Services</div>
<div class="t" style="left:386.20px;top:709.34px;font-size:11.65px;line-height:11.65px;color:#292a2e;font-weight:400;transform:scaleY(1.1);transform-origin:0 85%;">MOB-1</div>
<div class="loz" style="left:541px;top:709px;background:#e4e6ea">BUY NEW PHONE</div>
<div class="t" style="left:725.80px;top:710.02px;font-size:11.55px;line-height:11.55px;color:#292a2e;font-weight:400;transform:scaleY(1.1);transform-origin:0 85%;">Mon, Oct 27, 2025 9:30 AM</div>
<div class="av" style="left:953px;top:703px;background:#1c2b50;color:#fff"><span>DW</span></div>
<div class="t" style="left:979.90px;top:709.38px;font-size:11.6px;line-height:11.6px;color:#292a2e;font-weight:400;transform:scaleY(1.1);transform-origin:0 85%;">Deepak Waghmare</div>
<div class="row" style="top:734px;height:37px;background:#ffffff"></div>
<div class="hl" style="top:771px;background:#dcdfe4"></div>
<svg class="abs" style="left:21px;top:749px" width="10" height="6" viewBox="0 0 10 6"><path d="M0.7 0.7 L5 5 L9.3 0.7" stroke="#d4d4d4" stroke-width="1.3" fill="none"/></svg>
<div class="cb" style="left:81px;top:746px"></div>
<div class="abs" style="left:141px;top:746px;width:12px;height:12px"><svg width="12" height="12" viewBox="0 0 12 12"><rect width="12" height="12" rx="2" fill="#ff5722"/>
<circle cx="6" cy="6" r="4.4" fill="#1b2f5a"/><circle cx="6" cy="6" r="1.8" fill="#1fc3e6"/>
<path d="M2.8 2.8 L4.2 4.2 M7.8 7.8 L9.2 9.2" stroke="#fff" stroke-width="1.4"/></svg></div>
<div class="t" style="left:159.60px;top:745.83px;font-size:13.2px;line-height:13.2px;color:#292a2e;font-weight:400;transform:scaleY(1.1);transform-origin:0 85%;">Road to the Treble</div>
<div class="t" style="left:386.20px;top:747.34px;font-size:11.65px;line-height:11.65px;color:#292a2e;font-weight:400;transform:scaleY(1.1);transform-origin:0 85%;">RTTT-3</div>
<div class="loz" style="left:541px;top:748px;background:#e7f9ff">STORY</div>
<div class="t" style="left:725.80px;top:748.02px;font-size:11.55px;line-height:11.55px;color:#292a2e;font-weight:400;transform:scaleY(1.1);transform-origin:0 85%;">Fri, Oct 24, 2025 12:21 PM</div>
<div class="av" style="left:953px;top:741px;background:#f79a1f;color:#2b3a5c"><span>HR</span></div>
<div class="t" style="left:979.90px;top:747.38px;font-size:11.6px;line-height:11.6px;color:#292a2e;font-weight:400;transform:scaleY(1.1);transform-origin:0 85%;">Himanshu Rathod</div>
<div class="row" style="top:772px;height:10px;background:#f1f2f4"></div>
<div class="abs" style="left:11px;top:196px;width:1180px;height:7px;background:linear-gradient(rgba(0,0,0,.045),rgba(0,0,0,0))"></div>
</body></html>
